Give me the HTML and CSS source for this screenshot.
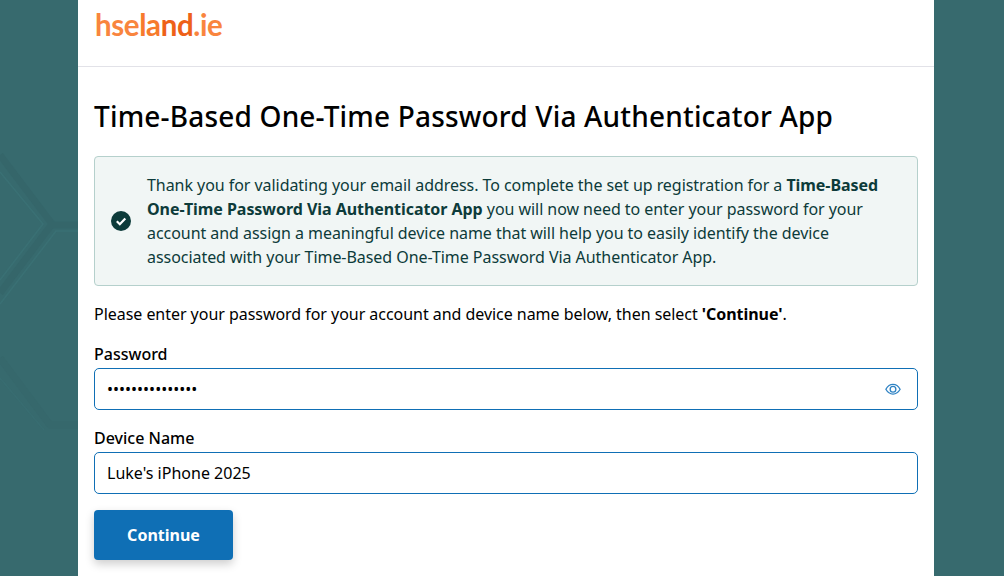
FILE: index.html
```html
<!DOCTYPE html>
<html lang="en">

<head>
    <meta name="viewport" content="width=device-width, initial-scale=1">
    <title>Time-Based One-Time Password Via Authenticator App</title>
    <link rel="stylesheet" href="styles.css">
</head>

<body>
    <svg class="bg-pattern" width="78" height="576" viewBox="0 0 78 576" aria-hidden="true">
        <path class="hex-dark" d="M0 155 L52 224 L0 293" />
        <path class="hex-dark" d="M52 225 H78" />
        <path class="hex-dark hex-faint" d="M0 358 L50 425 H78" />
        <path class="hex-light" d="M0 172 L43 224 L0 280" />
        <path class="hex-light" d="M0 304 L56 231 H78" />
        <path class="hex-light hex-faint" d="M0 378 L44 430" />
    </svg>

    <div class="page">
        <header class="top">
            <span class="logo">hse<span class="logo-mid">la</span><span class="logo-dark">nd</span>.ie</span>
        </header>

        <main class="content">
            <h1>Time-Based One-Time Password Via Authenticator App</h1>

            <div class="alert">
                <svg class="alert-icon" width="20" height="20" viewBox="0 0 20 20" aria-hidden="true">
                    <circle cx="10" cy="10" r="10" fill="#0d3b3a" />
                    <path d="M5.8 10.3 L8.8 13.2 L14.3 7.4" fill="none" stroke="#fff" stroke-width="2.2" />
                </svg>
                <p>Thank you for validating your email address. To complete the set up registration for a <b>Time-Based</b> <b>One-Time Password Via Authenticator App</b> you will now need to enter your password for your account and assign a meaningful device name that will help you to easily identify the device associated with your Time-Based One-Time Password Via Authenticator App.</p>
            </div>

            <p class="intro">Please enter your password for your account and device name below, then select <b>'Continue'</b>.</p>

            <form>
                <label for="password">Password</label>
                <div class="field">
                    <input type="password" id="password" value="Password1234567">
                    <svg class="eye" width="16" height="12.5" viewBox="0 0 18 14" aria-hidden="true">
                        <path d="M1 7 C3 3.4 5.8 1.6 9 1.6 C12.2 1.6 15 3.4 17 7 C15 10.6 12.2 12.4 9 12.4 C5.8 12.4 3 10.6 1 7 Z" />
                        <circle cx="9" cy="7" r="3.2" />
                    </svg>
                </div>

                <label for="device">Device Name</label>
                <div class="field">
                    <input type="text" id="device" value="Luke's iPhone 2025">
                </div>

                <button type="button">Continue</button>
            </form>
        </main>
    </div>
</body>

</html>
```

FILE: styles.css
```css
html,
body {
    height: 100%;
}

body {
    font-family: "Noto Sans", Arial, sans-serif;
    font-size: 16px;
    line-height: 24px;
    color: #000;
    margin: 0;
    padding: 0;
    background-color: #376a6e;
    overflow: hidden;
}

.bg-pattern {
    position: absolute;
    top: 0;
    left: 0;
}

.bg-pattern path {
    fill: none;
}

.hex-dark {
    stroke: #35666a;
    stroke-width: 7;
}

.hex-light {
    stroke: #3a7074;
    stroke-width: 1.5;
}

.hex-faint {
    opacity: 0.5;
}

.page {
    position: relative;
    width: 856px;
    height: 100%;
    margin-left: 78px;
    background-color: #fff;
}

.top {
    height: 67px;
    box-sizing: border-box;
    padding: 7px 17px 0;
    border-bottom: 1px solid #e2e2e8;
}

.logo {
    font-family: Lato, sans-serif;
    font-weight: 700;
    font-size: 29.5px;
    line-height: 36px;
    letter-spacing: -0.4px;
    color: #f9853e;
}

.logo-mid {
    color: #f77a2c;
}

.logo-dark {
    color: #ee6118;
}

.content {
    padding: 0 16px;
}

h1 {
    font-size: 28px;
    line-height: 36px;
    font-weight: 500;
    letter-spacing: 0.18px;
    margin: 31px 0 22px;
}

.alert {
    display: flex;
    align-items: center;
    gap: 16px;
    padding: 16px;
    border: 1px solid #b5d0cc;
    border-radius: 4px;
    background-color: #f1f6f5;
    color: #0d3b3a;
    letter-spacing: -0.05px;
}

.alert-icon {
    flex: none;
}

.alert p {
    margin: 0;
}

.intro {
    margin: 16px 0;
    letter-spacing: -0.04px;
}

label {
    display: block;
    font-weight: 500;
    margin-bottom: 2px;
}

.field {
    position: relative;
    margin-bottom: 16px;
}

input {
    display: block;
    width: 100%;
    height: 42px;
    padding: 0 12px;
    border: 1px solid #0f6fb5;
    border-radius: 5px;
    box-sizing: border-box;
    font-family: inherit;
    font-size: 16px;
    color: #000;
    outline: none;
}

.eye {
    position: absolute;
    top: 15px;
    right: 17px;
    fill: none;
    stroke: #2f83c4;
    stroke-width: 1.5;
}

button {
    display: block;
    width: 139px;
    height: 50px;
    background-color: #0f6fb5;
    color: #fff;
    font-family: inherit;
    font-size: 16px;
    font-weight: 700;
    border: none;
    border-radius: 4px;
    box-shadow: 0 4px 10px rgba(0, 0, 0, 0.2);
    cursor: pointer;
}
```
